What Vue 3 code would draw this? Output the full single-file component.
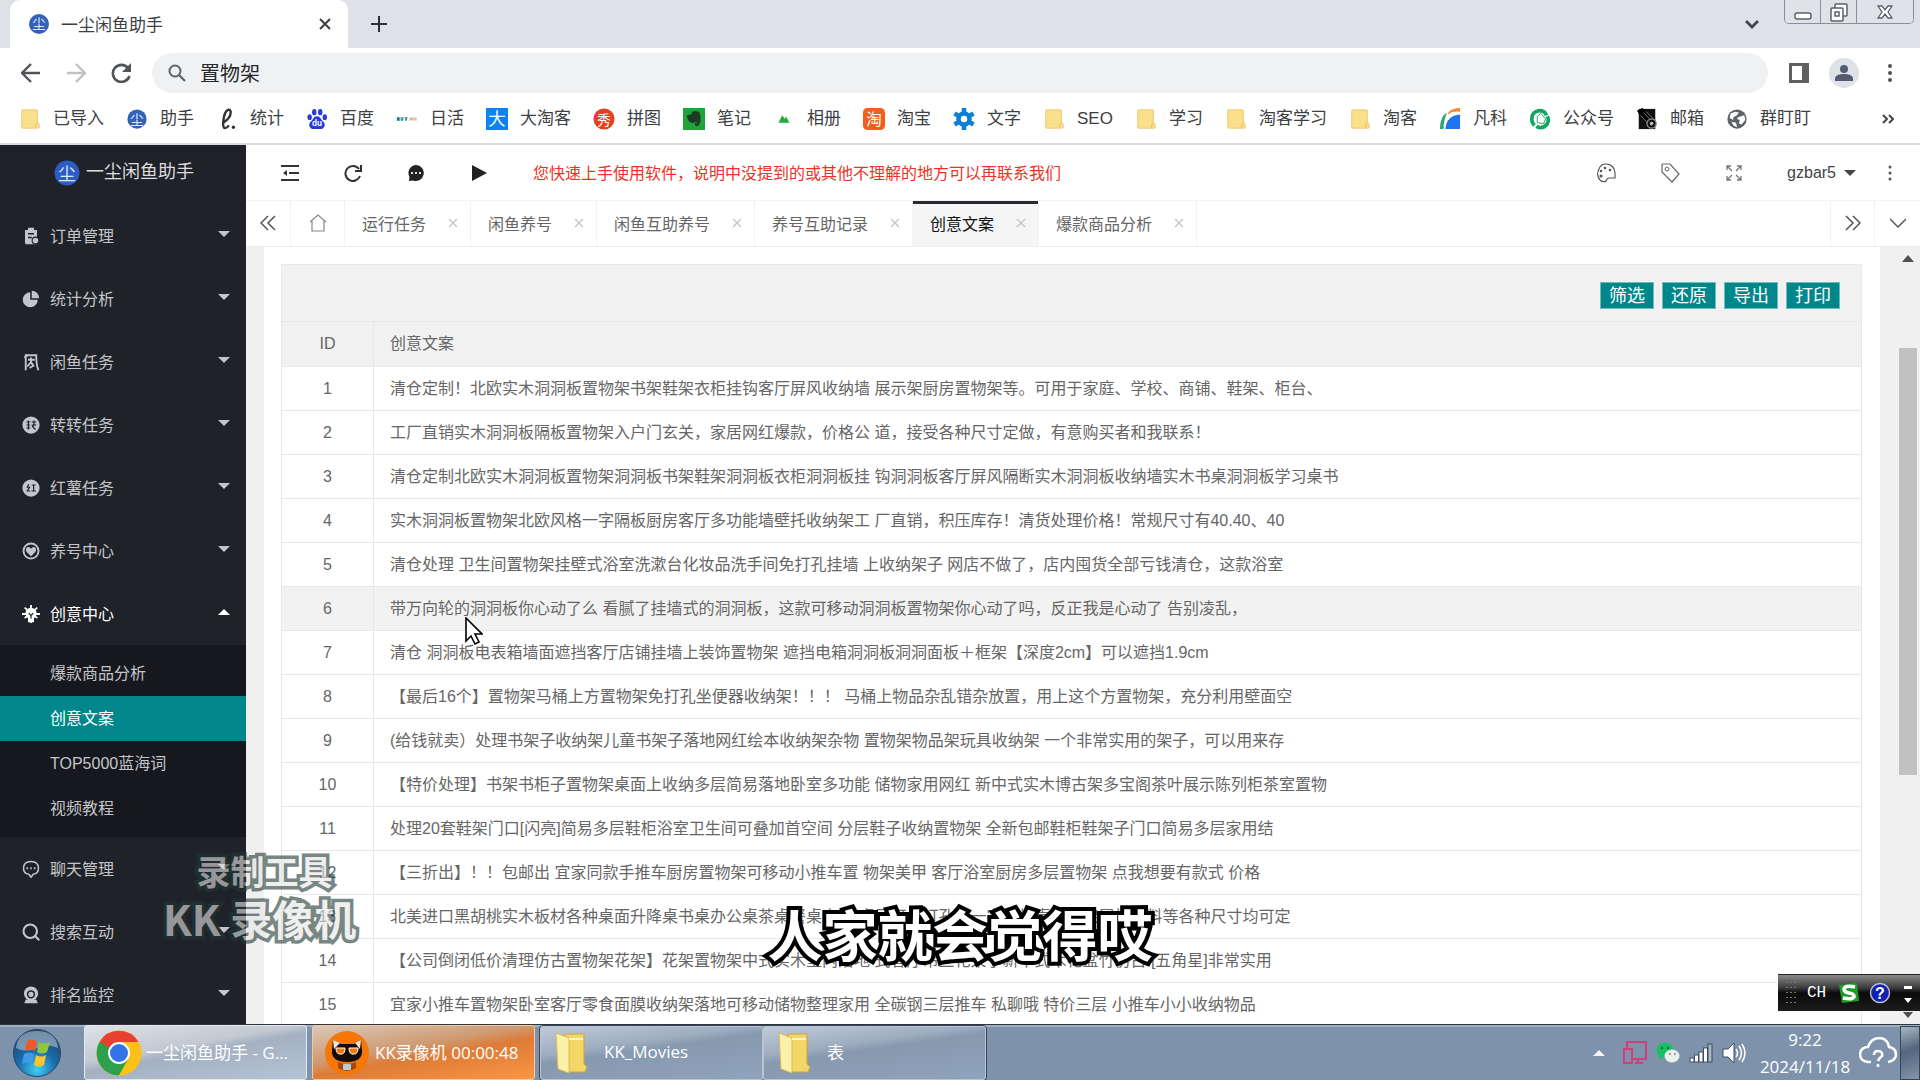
<script setup>
import { ref } from 'vue'

const glyph = (ch, fill, size = 14) =>
  `<text x="12" y="${12 + Math.round(size * 0.37)}" text-anchor="middle" font-size="${size}" fill="${fill}">${ch}</text>`

const folder =
  '<path d="M4 2h15q1 0 1 1v13q2 0 2 2v3q0 1-1 1H4q-1 0-1-1V3q0-1 1-1z" fill="#fbe08c" stroke="#e9c766"/><path d="M20 16q-2 1-2 5" fill="none" stroke="#e0ba50"/>'

const bookmarks = [
  { name: '已导入', icon: folder },
  { name: '助手', icon: '<circle cx="12" cy="12" r="10.500" fill="#3561b8"/>' + glyph('尘', '#dce8ff', 15) },
  { name: '统计', icon: '<path d="M8 16q8-5 8-11 0-4-3-3-4 2-5 12-1 8 2 8 2 0 4-3" fill="none" stroke="#333" stroke-width="2.600"/><circle cx="19" cy="21" r="1.800" fill="#333"/>' },
  { name: '百度', icon: '<g fill="#2a3bd6"><ellipse cx="4" cy="10" rx="2.400" ry="3.200"/><ellipse cx="9" cy="4.500" rx="2.400" ry="3.500"/><ellipse cx="15.500" cy="4.500" rx="2.400" ry="3.500"/><ellipse cx="20.500" cy="10" rx="2.400" ry="3.200"/><path d="M12 9c4 0 4 4 7 6 3 3 1 8-3 8h-8c-4 0-6-5-3-8 3-2 3-6 7-6z"/></g><text x="12" y="20" text-anchor="middle" font-size="9" font-weight="700" fill="#fff">du</text>' },
  { name: '日活', icon: '<path d="M1 10h3v4H1z" fill="#167a9b"/><path d="M5 10h3v4H5z" fill="#35a6a0"/><path d="M9 10h4v1H9zM10 11h2v3h-2z" fill="#2c8fae"/><path d="M14 10h9v4h-9z" fill="#f1d9cf"/><path d="M16 11h2v2h-2zM20 11h1v2h-1z" fill="#d9a08c"/>' },
  { name: '大淘客', icon: '<path d="M0 0h24v24H0z" fill="#0c83f5"/>' + glyph('大', '#fff', 19) },
  { name: '拼图', icon: '<circle cx="12" cy="12" r="11.500" fill="#e8401c"/>' + glyph('秀', '#fff', 15) },
  { name: '笔记', icon: '<path d="M0 0h24v24H0z" fill="#1fa43a"/><path d="M10 4q5-2 8 1 2 4 1 9-1 6-4 6-3-1-2-4h2q0 2 1 1 0-2-3-2-1 2-4 1-4-1-5-8l5-1z" fill="#1c3a26"/>' },
  { name: '相册', icon: '<path d="M6 16l4-8 3 4 1-3 4 7z" fill="#21ae38"/>' },
  { name: '淘宝', icon: '<rect width="24" height="24" rx="5" fill="#f0601c"/>' + glyph('淘', '#fff', 17) },
  { name: '文字', icon: '<g fill="none" stroke="#0f7fd6"><circle cx="12" cy="12" r="6" stroke-width="5"/><path d="M12 0v5M12 19v5M1.600 6l4.300 2.500M18.100 15.500l4.300 2.500M1.600 18l4.300-2.500M18.100 8.500l4.300-2.500" stroke-width="5"/></g>' },
  { name: 'SEO', icon: folder },
  { name: '学习', icon: folder },
  { name: '淘客学习', icon: folder },
  { name: '淘客', icon: folder },
  { name: '凡科', icon: '<path d="M10 5Q14 0 23 0v4Q14 3 10 7z" fill="#f28a3c"/><path d="M1 23Q1 9 9 5q-4 8-4 18z" fill="#2ba873"/><path d="M7 23Q8 8 23 7v16z" fill="#1f75f0"/>' },
  { name: '公众号', icon: '<g fill="none" stroke="#12a661" stroke-width="4"><path d="M11 3Q3 4 3 12q0 4 3 7"/><path d="M8 20q7 4 12-3 2-4 0-8"/><path d="M9 3q8-1 10 5"/></g><path d="M9 9l4-3 5 6-2 5-7-1z" fill="#fff" stroke="#12a661" stroke-width="1"/>' },
  { name: '邮箱', icon: '<path d="M3 1h18v22H3z" fill="#111"/><path d="M1 3l6-3 12 12-7 8z" fill="#000"/><path d="M5 8l8 9M8 5l9 9M11 4l8 8" stroke="#888" fill="none"/><circle cx="17" cy="17" r="5" fill="#111" stroke="#888" stroke-width="1.500"/><circle cx="17" cy="17" r="2" fill="#bbb"/>' },
  { name: '群盯盯', icon: '<circle cx="12" cy="12" r="10.500" fill="#5f6368"/><path d="M5 6l5-2 4 1-2 3-4 2 0 3-4-2zM13 10l7-2 1 5-4 5-3-1 1-4-3-1zM6 15l5 1 1 5-4-2z" fill="#fff"/>' },
]

const menu = [
  { name: '订单管理', caret: true, icon: '<path d="M4 4h4V1h8v3h4v17q0 2-2 2H6q-2 0-2-2z" fill="currentColor"/><path d="M8 9h8M8 14h5" stroke="#20222a" stroke-width="2"/><circle cx="18" cy="18" r="4.500" fill="currentColor" stroke="#20222a" stroke-width="1.500"/>' },
  { name: '统计分析', caret: true, icon: '<path d="M11 3a10 10 0 1 0 10 10H11z" fill="currentColor"/><path d="M13 1a10 10 0 0 1 10 10H13z" fill="currentColor"/>' },
  { name: '闲鱼任务', caret: true, icon: '<path d="M5 23V3h14q0 14 3 20M8 3L3 6M8 9h9M12 6v9M12 12l-5 6M12 12l4 6M10 20l5-3" fill="none" stroke="currentColor" stroke-width="2.500"/>' },
  { name: '转转任务', caret: true, icon: '<circle cx="12" cy="12" r="11.500" fill="currentColor"/><path d="M6 8h5M6 12h5M6 16h5M8.500 6v12M13 8h6M13 12h6M16 6v6l-2 2 4 4" stroke="#20222a" stroke-width="1.600" fill="none"/>' },
  { name: '红薯任务', caret: true, icon: '<circle cx="12" cy="12" r="11.500" fill="currentColor"/><path d="M9 7l-2 4h3l-3 5h4M13 8h5M15.500 8v8M12.500 16h6" stroke="#20222a" stroke-width="1.600" fill="none"/>' },
  { name: '养号中心', caret: true, icon: '<circle cx="12" cy="12" r="10" fill="none" stroke="currentColor" stroke-width="2.500"/><path d="M12 19l-6-6q-2-4 1-6 3-1 5 2 2-3 5-2 3 2 1 6z" fill="currentColor"/>' },
  {
    name: '创意中心', caret: true, open: true,
    icon: '<path d="M12 0v24M0 12h24M3.500 3.500l17 14M20.500 3.500l-17 14" stroke="currentColor" stroke-width="2.400"/><circle cx="12" cy="11" r="7.500" fill="currentColor"/><path d="M8 16h8v7H8z" fill="currentColor"/><path d="M9 11l3 3 3-3M12 14v4" stroke="#20222a" stroke-width="1.600" fill="none"/>',
    children: ['爆款商品分析', '创意文案', 'TOP5000蓝海词', '视频教程'],
  },
  { name: '聊天管理', caret: true, icon: '<path d="M12 2q10 0 10 9 0 7-7 8l-3 4-3-4q-7-1-7-8 0-9 10-9z" fill="none" stroke="currentColor" stroke-width="2"/><path d="M6 11h2M11 11h2M16 11h2" stroke="currentColor" stroke-width="2.500"/>' },
  { name: '搜索互动', caret: true, icon: '<circle cx="11" cy="11" r="9" fill="none" stroke="currentColor" stroke-width="2.800"/><path d="M17 17l6 6" stroke="currentColor" stroke-width="2.800"/>' },
  { name: '排名监控', caret: true, icon: '<circle cx="12" cy="10" r="9.500" fill="currentColor"/><path d="M5 18h14l2 5H3z" fill="currentColor"/><circle cx="12" cy="11" r="4.500" fill="none" stroke="#20222a" stroke-width="2"/>' },
]

const activeChild = '创意文案'
const tabs = ['运行任务', '闲鱼养号', '闲鱼互助养号', '养号互助记录', '创意文案', '爆款商品分析']
const actions = ['筛选', '还原', '导出', '打印']

const rows = [
  '清仓定制！北欧实木洞洞板置物架书架鞋架衣柜挂钩客厅屏风收纳墙 展示架厨房置物架等。可用于家庭、学校、商铺、鞋架、柜台、',
  '工厂直销实木洞洞板隔板置物架入户门玄关，家居网红爆款，价格公 道，接受各种尺寸定做，有意购买者和我联系！',
  '清仓定制北欧实木洞洞板置物架洞洞板书架鞋架洞洞板衣柜洞洞板挂 钩洞洞板客厅屏风隔断实木洞洞板收纳墙实木书桌洞洞板学习桌书',
  '实木洞洞板置物架北欧风格一字隔板厨房客厅多功能墙壁托收纳架工 厂直销，积压库存！清货处理价格！常规尺寸有40.40、40',
  '清仓处理 卫生间置物架挂壁式浴室洗漱台化妆品洗手间免打孔挂墙 上收纳架子 网店不做了，店内囤货全部亏钱清仓，这款浴室',
  '带万向轮的洞洞板你心动了么 看腻了挂墙式的洞洞板，这款可移动洞洞板置物架你心动了吗，反正我是心动了 告别凌乱，',
  '清仓 洞洞板电表箱墙面遮挡客厅店铺挂墙上装饰置物架 遮挡电箱洞洞板洞洞面板＋框架【深度2cm】可以遮挡1.9cm',
  '【最后16个】置物架马桶上方置物架免打孔坐便器收纳架！！！ 马桶上物品杂乱错杂放置，用上这个方置物架，充分利用壁面空',
  '(给钱就卖）处理书架子收纳架儿童书架子落地网红绘本收纳架杂物 置物架物品架玩具收纳架 一个非常实用的架子，可以用来存',
  '【特价处理】书架书柜子置物架桌面上收纳多层简易落地卧室多功能 储物家用网红 新中式实木博古架多宝阁茶叶展示陈列柜茶室置物',
  '处理20套鞋架门口[闪亮]简易多层鞋柜浴室卫生间可叠加首空间 分层鞋子收纳置物架 全新包邮鞋柜鞋架子门口简易多层家用结',
  '【三折出】！！包邮出 宜家同款手推车厨房置物架可移动小推车置 物架美甲 客厅浴室厨房多层置物架 点我想要有款式 价格',
  '北美进口黑胡桃实木板材各种桌面升降桌书桌办公桌茶桌餐桌电脑 桌子可以打孔做一字隔板桌腿书架层板材料等各种尺寸均可定',
  '【公司倒闭低价清理仿古置物架花架】花架置物架中式实木室内落地 式客厅吊兰花架子新中式木花盆竹仿古 [五角星]非常实用',
  '宜家小推车置物架卧室客厅零食面膜收纳架落地可移动储物整理家用 全碳钢三层推车 私聊哦 特价三层 小推车小小收纳物品',
]
const hovered = 6
const query = ref('置物架')
</script>

<template>
  <div class="screen">
    <header class="browser">
      <div class="tabstrip">
        <div class="btab">
          <svg class="i20" viewBox="0 0 24 24"><circle cx="12" cy="12" r="12" fill="#3561b8" /><text x="12" y="18" text-anchor="middle" font-size="16" fill="#dce8ff">尘</text></svg>
          <span class="btitle">一尘闲鱼助手</span>
          <button class="plain" aria-label="关闭标签页"><svg class="i12" viewBox="0 0 12 12"><path d="M1 1l10 10M11 1L1 11" stroke="#3c4043" stroke-width="2" /></svg></button>
        </div>
        <button class="plain newtab" aria-label="新标签页"><svg class="i16" viewBox="0 0 16 16"><path d="M8 0v16M0 8h16" stroke="#303134" stroke-width="2" /></svg></button>
        <button class="plain tabsearch" aria-label="搜索标签页"><svg class="i14" viewBox="0 0 14 14"><path d="M1 4l6 6 6-6" fill="none" stroke="#45484c" stroke-width="3" /></svg></button>
        <div class="winbtns">
          <button aria-label="最小化"><svg width="18" height="20" viewBox="0 0 18 20"><rect x="1" y="11" width="16" height="6" rx="2" fill="#fff" stroke="#5c6068" stroke-width="1.500" /></svg></button>
          <button aria-label="还原"><svg width="20" height="20" viewBox="0 0 20 20"><g fill="#fff" stroke="#5c6068" stroke-width="1.500"><rect x="6" y="2" width="12" height="12" rx="1" /><rect x="2" y="6" width="12" height="13" rx="1" /><rect x="6" y="10" width="4" height="4" /></g></svg></button>
          <button class="wide" aria-label="关闭"><svg width="18" height="18" viewBox="0 0 18 18"><path d="M2 3h4l3 4 3-4h4l-4 6 4 6h-4l-3-4-3 4H2l4-6z" fill="#fff" stroke="#5c6068" stroke-width="1.300" /></svg></button>
        </div>
      </div>

      <div class="navbar">
        <button class="plain nav" aria-label="后退"><svg class="i20" viewBox="0 0 20 20"><path d="M19 10H2M10 1l-9 9 9 9" fill="none" stroke="#505357" stroke-width="2.400" /></svg></button>
        <button class="plain nav" aria-label="前进"><svg class="i20" viewBox="0 0 20 20"><path d="M1 10h17M10 1l9 9-9 9" fill="none" stroke="#bfc1c4" stroke-width="2.400" /></svg></button>
        <button class="plain nav" aria-label="刷新"><svg class="i20" viewBox="0 0 20 20"><path d="M17 5a8.500 8.500 0 1 0 1.500 8" fill="none" stroke="#505357" stroke-width="2.600" /><path d="M20 0v9h-9z" fill="#505357" /></svg></button>
        <label class="omnibox">
          <svg class="i18" viewBox="0 0 18 18"><circle cx="7" cy="7" r="5.500" fill="none" stroke="#606367" stroke-width="2" /><path d="M11 11l6 6" stroke="#606367" stroke-width="2.200" /></svg>
          <input v-model="query" type="text" aria-label="地址和搜索栏" />
        </label>
        <button class="plain side" aria-label="侧边栏"><svg class="i20" viewBox="0 0 20 20"><rect x="1.500" y="1.500" width="17" height="17" fill="#fff" stroke="#5f6062" stroke-width="3" /><path d="M13 1h6v18h-6z" fill="#5f6062" /></svg></button>
        <button class="plain avatar" aria-label="个人资料"><svg class="i18" viewBox="0 0 18 18"><circle cx="9" cy="5" r="4" fill="#535a72" /><path d="M0 17v-3q1-4 9-4t9 4v3z" fill="#535a72" /></svg></button>
        <button class="plain kebab" aria-label="菜单"><svg width="6" height="20" viewBox="0 0 6 20"><g fill="#505357"><circle cx="3" cy="3" r="2" /><circle cx="3" cy="10" r="2" /><circle cx="3" cy="17" r="2" /></g></svg></button>
      </div>

      <nav class="bookmarks">
        <a v-for="b in bookmarks" :key="b.name" href="#"><svg class="i22" viewBox="0 0 24 24" v-html="b.icon"></svg>{{ b.name }}</a>
        <button class="plain more" aria-label="更多书签"><svg class="i12" viewBox="0 0 12 12"><path d="M1 2l4 4-4 4M7 2l4 4-4 4" fill="none" stroke="#45484c" stroke-width="2" /></svg></button>
      </nav>
    </header>

    <div class="app">
      <aside class="sidebar">
        <div class="logo">
          <svg class="i26" viewBox="0 0 24 24"><circle cx="12" cy="12" r="11.500" fill="#2c5cc4" /><text x="12" y="18" text-anchor="middle" font-size="16" fill="#dce8ff">尘</text></svg>
          <span>一尘闲鱼助手</span>
        </div>
        <ul class="menu">
          <li v-for="m in menu" :key="m.name">
            <a href="#" class="item" :class="{ open: m.open }">
              <svg class="i18" viewBox="0 0 24 24" v-html="m.icon"></svg>
              <span>{{ m.name }}</span>
              <i v-if="m.caret" class="caret"></i>
            </a>
            <ul v-if="m.children" class="sub">
              <li v-for="c in m.children" :key="c"><a href="#" :class="{ on: c === activeChild }">{{ c }}</a></li>
            </ul>
          </li>
        </ul>
      </aside>

      <main class="main">
        <div class="topbar">
          <div class="tools">
            <button class="plain" aria-label="收起菜单"><svg class="i18" viewBox="0 0 18 18"><path d="M0 2h18M8 9h10M0 16h18" stroke="#333" stroke-width="2" /><path d="M6 6v6L2 9z" fill="#333" /></svg></button>
            <button class="plain" aria-label="刷新"><svg class="i18" viewBox="0 0 18 18"><path d="M15 5a7.500 7.500 0 1 0 1 7" fill="none" stroke="#333" stroke-width="2" /><path d="M17 1v6h-6" fill="none" stroke="#333" stroke-width="2" /></svg></button>
            <button class="plain" aria-label="消息"><svg class="i18" viewBox="0 0 18 18"><path d="M9 1a8 8 0 1 1-3 15.500L2 17l.5-4A8 8 0 0 1 9 1z" fill="#222" /><path d="M4 9h2M8 9h2M12 9h2" stroke="#ddd" stroke-width="2" /></svg></button>
            <button class="plain" aria-label="播放"><svg class="i18" viewBox="0 0 18 18"><path d="M2 1l15 8-15 8z" fill="#222" /></svg></button>
          </div>
          <p class="notice">您快速上手使用软件，说明中没提到的或其他不理解的地方可以再联系我们</p>
          <div class="user">
            <button class="plain" aria-label="主题"><svg class="i20" viewBox="0 0 20 20"><path d="M10 1c6 0 9 5 9 9v5l-6 0c-2 0-2 1-3 3-1 1-4 1-6-1-3-3-3-8-1-11 1-3 4-5 7-5z" fill="none" stroke="#555" stroke-width="1.200" /><g fill="#555"><circle cx="5" cy="8" r="1.300" /><circle cx="9" cy="5" r="1.300" /><circle cx="14" cy="7" r="1.300" /><circle cx="5" cy="13" r="1.600" /></g></svg></button>
            <button class="plain" aria-label="便签"><svg class="i20" viewBox="0 0 20 20"><path d="M1 2q0-1 1-1h7l9 10-7 8L1 9z" fill="none" stroke="#666" stroke-width="1.200" /><circle cx="6" cy="6" r="2" fill="none" stroke="#666" /></svg></button>
            <button class="plain" aria-label="全屏"><svg class="i16" viewBox="0 0 16 16"><path d="M6 6L1 1M1 5V1h4M10 6l5-5M11 1h4v4M6 10l-5 5M1 11v4h4M10 10l5 5M11 15h4v-4" fill="none" stroke="#777" stroke-width="1.300" /></svg></button>
            <a href="#" class="name">gzbar5<i class="caret dark"></i></a>
            <button class="plain last" aria-label="更多"><svg width="4" height="18" viewBox="0 0 4 18"><g fill="#555"><circle cx="2" cy="3" r="1.500" /><circle cx="2" cy="9" r="1.500" /><circle cx="2" cy="15" r="1.500" /></g></svg></button>
          </div>
        </div>

        <div class="pagetabs">
          <button class="plain cell" aria-label="向左"><svg class="i16" viewBox="0 0 16 16"><path d="M8 1L1 8l7 7M15 1L8 8l7 7" fill="none" stroke="#555" stroke-width="1.500" /></svg></button>
          <button class="plain cell home" aria-label="首页"><svg class="i18" viewBox="0 0 18 18"><path d="M1 8l8-7 8 7M3 7v10h12V7" fill="none" stroke="#888" stroke-width="1.200" /></svg></button>
          <div v-for="t in tabs" :key="t" class="ptab" :class="{ on: t === activeChild }">
            <a href="#">{{ t }}</a>
            <button class="plain" :aria-label="'关闭' + t"><svg class="i10" viewBox="0 0 10 10"><path d="M1 1l8 8M9 1L1 9" stroke="#c4c4c4" stroke-width="1.300" /></svg></button>
          </div>
          <button class="plain cell right" aria-label="向右"><svg class="i16" viewBox="0 0 16 16"><path d="M1 1l7 7-7 7M8 1l7 7-7 7" fill="none" stroke="#555" stroke-width="1.500" /></svg></button>
          <button class="plain cell" aria-label="标签菜单"><svg class="i16" viewBox="0 0 16 16"><path d="M0 4l8 8 8-8" fill="none" stroke="#555" stroke-width="1.500" /></svg></button>
        </div>

        <div class="content">
          <section class="card">
            <div class="tbar"><button v-for="a in actions" :key="a">{{ a }}</button></div>
            <table>
              <thead><tr><th class="id">ID</th><th>创意文案</th></tr></thead>
              <tbody>
                <tr v-for="(r, n) in rows" :key="n" :class="{ hover: n + 1 === hovered }">
                  <td class="id">{{ n + 1 }}</td><td>{{ r }}</td>
                </tr>
              </tbody>
            </table>
          </section>
          <div class="scroll"><i class="up"></i><i class="thumb"></i><i class="down"></i></div>
        </div>
      </main>
    </div>

    <footer class="taskbar">
      <button class="start" aria-label="开始">
        <svg width="50" height="50" viewBox="0 0 50 50">
          <defs><radialGradient id="orb" cx="50%" cy="85%" r="80%"><stop offset="0" stop-color="#3fd0f5" /><stop offset=".5" stop-color="#1a6bab" /><stop offset="1" stop-color="#24486f" /></radialGradient></defs>
          <circle cx="25" cy="25" r="23.500" fill="url(#orb)" stroke="#26466b" />
          <path d="M4 20Q6 3 25 3t21 17Q36 15 25 20 14 25 4 20z" fill="#fff" opacity=".38" />
          <path d="M15 13q5-3 10 0l-2 10q-5-3-10 0z" fill="#ee5a24" /><path d="M27 14q5 3 11 0l-3 10q-5 3-10 0z" fill="#8fc73e" />
          <path d="M12 26q5-3 10 0l-2 10q-5-3-10 0z" fill="#3f9be8" /><path d="M24 27q5 3 10 0l-2 10q-5 3-10 0z" fill="#fdc62f" />
        </svg>
      </button>
      <button class="task chrome">
        <svg width="46" height="46" viewBox="0 0 46 46"><circle cx="23" cy="23" r="22.500" fill="#fbc116" /><path d="M3.500 12A22.500 22.500 0 0 1 42.500 12H23v22z" fill="#e8412f" /><path d="M3.500 12A22.500 22.500 0 0 0 23 45.500L32.500 29 23 23z" fill="#2da04c" /><path d="M23 12h19.500A22.500 22.500 0 0 1 23 45.500L32.500 29z" fill="#fbc116" /><circle cx="23" cy="23" r="11" fill="#fff" /><circle cx="23" cy="23" r="9" fill="#3273e8" /></svg>
        <span>一尘闲鱼助手 - G...</span>
      </button>
      <button class="task kk">
        <svg width="44" height="44" viewBox="0 0 44 44"><circle cx="22" cy="22" r="22" fill="#f57806" /><path d="M8 9l8 4h13l7-4 1 10q1 12-15 12T7 19z" fill="#120d0a" /><path d="M8 9l7 3-6 6zM36 9l-6 3 5 6z" fill="#f2e6da" /><path d="M11 17h9q0 7-5 6-4 0-4-6zM24 17h9q0 6-4 6-5 1-5-6z" fill="#f57806" stroke="#fff" /><path d="M13 31q9 4 18 0v6q-9 6-18 0z" fill="#a4480b" /><rect x="18" y="33" width="8" height="6" rx="1" fill="#c3cbd2" /></svg>
        <span>KK录像机 00:00:48</span>
      </button>
      <div class="pair">
        <button v-for="f in ['KK_Movies', '表']" :key="f" class="task dir">
          <svg width="34" height="44" viewBox="0 0 34 44"><path d="M10 3h19v30l3 3-2 5H10z" fill="#f2d667" stroke="#cba73c" /><path d="M1 2l13 5v35L3 38z" fill="#fdf0a8" stroke="#d9ba54" /><path d="M14 8h14" stroke="#fff6c8" stroke-width="2" /></svg>
          <span>{{ f }}</span>
        </button>
      </div>
      <div class="tray">
        <i class="trayup"></i>
        <svg width="24" height="24" viewBox="0 0 24 24"><g fill="none" stroke="#cf3f7c" stroke-width="2"><path d="M4 7V1h19v17H10M12 22h8M15 18v4" /><rect x="1" y="8" width="8" height="14" /></g></svg>
        <svg width="24" height="24" viewBox="0 0 24 24"><ellipse cx="9" cy="9" rx="8.500" ry="7.500" fill="#1bbf63" /><path d="M3 14l-1 5 5-3z" fill="#1bbf63" /><ellipse cx="16" cy="15" rx="7.500" ry="6.500" fill="#e9f2ec" /><g fill="#126b39"><circle cx="6" cy="7" r="1.200" /><circle cx="12" cy="7" r="1.200" /></g><g fill="#78857d"><circle cx="14" cy="13" r="1" /><circle cx="19" cy="13" r="1" /></g></svg>
        <svg width="24" height="20" viewBox="0 0 24 20"><g fill="#fff" stroke="#3d4c60" stroke-width="1"><rect x="1" y="15" width="4" height="4" /><rect x="5.500" y="12" width="4" height="7" /><rect x="10" y="9" width="4" height="10" /><rect x="14.500" y="5" width="4" height="14" /><rect x="19" y="1" width="4" height="18" fill="#a9b6c6" /></g></svg>
        <svg width="24" height="24" viewBox="0 0 24 24"><path d="M1 8h5l6-6v20l-6-6H1z" fill="#fff" stroke="#3d4c60" /><path d="M14 8q3 4 0 8M17 5q5 7 0 14M20 3q6 9 0 18" fill="none" stroke="#fff" stroke-width="1.500" /></svg>
      </div>
      <div class="clock"><span>9:22</span><span>2024/11/18</span></div>
      <svg class="cloud" width="38" height="32" viewBox="0 0 38 32"><path d="M12 25H9Q1 24 1 17q1-7 8-7Q12 1 21 1q8 1 9 9 7 1 7 8-1 6-8 7" fill="none" stroke="#fff" stroke-width="2.500" /><path d="M15 18q0-4 4-4 5 0 4 5-3 2-4 5M19 27v3" fill="none" stroke="#fff" stroke-width="2.500" /></svg>
      <button class="desk" aria-label="显示桌面"></button>
    </footer>

    <div class="lang">
      <i class="grip"></i>
      <span class="ch">CH</span>
      <svg class="i22" viewBox="0 0 22 22"><path d="M1 3l18-2 2 18-17 2z" fill="#1f9a24" /><path d="M17 5q-10-2-11 2 0 3 5 4 6 1 5 4-2 3-11 1" fill="none" stroke="#fff" stroke-width="3.500" /></svg>
      <svg class="i22" viewBox="0 0 22 22"><circle cx="11" cy="11" r="9.500" fill="#1220b0" stroke="#b9bdd8" stroke-width="1.500" /><text x="11" y="17" text-anchor="middle" font-size="16" font-weight="700" fill="#fff">?</text></svg>
      <svg class="opts" width="10" height="22" viewBox="0 0 10 22"><path d="M1 4h8v3H1zM1 16h8l-4 5z" fill="#fff" /></svg>
    </div>

    <div class="watermark"><span class="wm1">录制工具</span><span class="wm2">KK 录像机</span></div>
    <p class="caption">人家就会觉得哎</p>
    <svg class="cursor" width="18" height="28" viewBox="0 0 18 28"><path d="M1 1v23l5-5 4 8 4-2-4-8h7z" fill="#fff" stroke="#000" stroke-width="1.600" /></svg>
  </div>
</template>

<style>
html,
body {
  margin: 0;
  background: #f0f0f0;
}
</style>

<style scoped>
.screen {
  position: relative;
  display: flex;
  flex-direction: column;
  height: 100vh;
  overflow: hidden;
  font-family: "Liberation Sans", "Noto Sans CJK SC", sans-serif;
  font-size: 16px;
  color: #666;
}
* { box-sizing: border-box; }
a { color: inherit; text-decoration: none; }
ul { list-style: none; margin: 0; padding: 0; }
svg { display: block; flex: none; }
button, input { font: inherit; color: inherit; }
.plain { border: 0; background: none; padding: 0; display: flex; align-items: center; justify-content: center; flex: none; }
.i10 { width: 10px; height: 10px; }
.i12 { width: 12px; height: 12px; }
.i14 { width: 14px; height: 14px; }
.i16 { width: 16px; height: 16px; }
.i18 { width: 18px; height: 18px; }
.i20 { width: 20px; height: 20px; }
.i22 { width: 22px; height: 22px; }
.i26 { width: 26px; height: 26px; }

/* browser chrome */
.browser { flex: none; background: #fff; color: #3c4043; border-bottom: 2px solid #dcdadd; }
.tabstrip { display: flex; align-items: center; height: 48px; background: #dee1e6; padding: 0 6px 0 10px; }
.btab { display: flex; align-items: center; width: 338px; height: 48px; padding: 0 17px 0 19px; background: #fff; border-radius: 10px 10px 0 0; }
.btitle { flex: 1; margin-left: 12px; padding-bottom: 2px; font-size: 17px; }
.newtab { margin-left: 23px; }
.tabsearch { margin-left: auto; margin-right: 25px; }
.winbtns { display: flex; align-self: flex-start; height: 24px; border: 1px solid #8b9098; border-top: 0; border-radius: 0 0 5px 5px; overflow: hidden; }
.winbtns button { display: flex; align-items: center; justify-content: center; width: 36px; padding: 0; border: 0; border-right: 1px solid #8b9098; background: #dfe2e7; }
.winbtns .wide { width: 56px; border-right: 0; }
.navbar { display: flex; align-items: center; height: 50px; padding: 0 20px 0 8px; }
.nav { width: 45px; height: 40px; }
.omnibox { display: flex; flex: 1; align-items: center; height: 40px; margin-left: 9px; padding: 0 16px; border-radius: 20px; background: #f0f1f3; }
.omnibox input { flex: 1; margin-left: 14px; padding: 0 0 2px; border: 0; outline: 0; background: none; font-size: 20px; color: #26282b; }
.side { margin-left: 21px; }
.avatar { width: 30px; height: 30px; margin-left: 20px; border-radius: 50%; background: #dfe1e8; }
.kebab { width: 20px; margin-left: 21px; }
.bookmarks { display: flex; align-items: center; gap: 22px; height: 45px; padding: 0 26px 4px 19px; font-size: 17px; line-height: 22px; white-space: nowrap; }
.bookmarks a { display: flex; align-items: center; gap: 12px; }
.more { margin-left: auto; }

/* application */
.app { display: flex; flex: 1; min-height: 0; }
.sidebar { flex: none; width: 246px; overflow: hidden; background: #20222a; color: #c4c5c8; }
.logo { display: flex; align-items: center; gap: 6px; height: 59px; padding: 0 0 4px 54px; font-size: 18px; line-height: 22px; color: #dcdddf; }
.logo span { padding-bottom: 2px; }
.item { display: flex; align-items: center; height: 63px; padding: 0 16px 0 22px; }
.item span { flex: 1; margin-left: 10px; padding-bottom: 2px; }
.item.open { color: #fff; }
.caret { width: 0; height: 0; margin-bottom: 4px; border: 6px solid transparent; border-top-color: currentColor; border-bottom: 0; }
.open .caret { border-top: 0; border-bottom: 6px solid currentColor; }
.sub { padding: 6px 0; background: #16181e; }
.sub a { display: block; height: 45px; padding-left: 50px; line-height: 45px; }
.sub .on { background: #00868b; color: #fff; }

.main { display: flex; flex: 1; flex-direction: column; min-width: 0; background: #fff; }
.topbar { display: flex; flex: none; align-items: center; height: 55px; padding: 0 23px 0 35px; }
.tools { display: flex; gap: 45px; }
.notice { margin: 0 0 0 45px; padding-bottom: 2px; color: #ee3124; white-space: nowrap; }
.user { display: flex; align-items: center; gap: 45px; margin-left: auto; color: #444; }
.name { display: flex; align-items: center; gap: 8px; }
.dark { margin-bottom: 0; }
.last { width: 14px; margin-left: -18px; }
.pagetabs { display: flex; flex: none; height: 47px; border-top: 1px solid #f3f3f3; border-bottom: 1px solid #eee; }
.cell { width: 45px; padding-bottom: 2px; border-right: 1px solid #f3f3f3; }
.cell:last-child { border-right: 0; }
.home { width: 54px; }
.right { margin-left: auto; border-left: 1px solid #f3f3f3; }
.ptab { display: flex; align-items: center; gap: 22px; padding: 0 12px 2px 17px; border-right: 1px solid #f3f3f3; white-space: nowrap; }
.ptab.on { background: #f5f5f5; color: #111; box-shadow: inset 0 3px #292b34; }
.content { display: flex; flex: 1; min-height: 0; padding-left: 18px; overflow: hidden; background: #f0f0f0; }
.card { flex: 1; min-width: 0; padding: 17px 18px 0 17px; background: #fff; }
.tbar { display: flex; align-items: center; justify-content: flex-end; gap: 8px; height: 57px; padding: 5px 21px 0 0; border: 1px solid #eaeaea; border-bottom: 0; background: #f1f1f1; }
.tbar button { width: 54px; height: 27px; padding: 0; border: 1px solid #6fbcbc; background: #00868b; color: #fff; font-size: 18px; line-height: 24px; }
table { width: 100%; table-layout: fixed; border-collapse: collapse; }
th, td { height: 44px; padding: 0 16px; overflow: hidden; border: 1px solid #e8e8e8; text-align: left; font-weight: 400; line-height: 20px; white-space: nowrap; }
th { height: 45px; background: #f1f1f1; }
.id { width: 92px; text-align: center; }
.hover { background: #f2f2f2; }
.scroll { display: flex; flex: none; flex-direction: column; align-items: center; width: 40px; padding: 8px 2px 6px 18px; }
.up { border: 6px solid transparent; border-top: 0; border-bottom: 7px solid #505050; }
.thumb { width: 18px; height: 56%; margin-top: 86px; background: #c1c1c1; }
.down { margin-top: auto; border: 5px solid transparent; border-bottom: 0; border-top: 6px solid #505050; }

/* desktop taskbar */
.taskbar { display: flex; flex: none; align-items: center; height: 56px; border-top: 1px solid #30353f; background: #7e93ab; box-shadow: inset 0 2px #9fb0c3; color: #fff; font-family: "Open Sans", "Noto Sans CJK SC", sans-serif; font-size: 17px; }
.start { width: 84px; padding: 0 0 0 12px; border: 0; background: none; }
.task { display: flex; align-items: center; height: 55px; padding: 0; border: 1px solid #e1e8ef; border-radius: 3px; white-space: nowrap; }
.task span { padding-bottom: 3px; }
.chrome { width: 223px; padding-left: 11px; background: linear-gradient(170deg, #dfe2e6 0, #c2c9d2 40%, #a4b1c1 50%, #b4c3d6 100%); }
.chrome span { margin-left: 4px; }
.kk { width: 223px; margin-left: 5px; padding-left: 12px; border-color: #f7c99c; background: linear-gradient(170deg, #dcc8b8 0, #cf9b73 40%, #dd7c37 55%, #fb9544 100%); }
.kk span { margin-left: 6px; }
.pair { display: flex; margin-left: 4px; border: 1px solid #35465c; border-radius: 4px; }
.dir { width: 223px; height: 54px; padding-left: 14px; border-color: #b8c5d4; background: linear-gradient(172deg, #c0cbd8 0, #9dacbf 35%, #8799af 45%, #8fa3bc 100%); }
.dir span { margin-left: 15px; }
.tray { display: flex; align-items: center; gap: 9px; margin-left: auto; }
.trayup { margin-right: 9px; border: 6px solid transparent; border-top: 0; border-bottom: 6px solid #f0f4f8; }
.clock { display: flex; flex-direction: column; align-items: center; width: 92px; margin-left: 13px; font-size: 17px; line-height: 27px; }
.cloud { margin: 0 3px 0 8px; }
.desk { width: 20px; height: 54px; border: 1px solid #35465c; background: linear-gradient(160deg, #a9b6c5, #53667f 45%, #8294a9); }

/* floating layers */
.lang { position: absolute; right: 0; bottom: 69px; display: flex; align-items: center; width: 142px; height: 37px; padding: 0 7px; background: linear-gradient(#8a8a8a, #3c3c3c 35%, #0b0b0b 50%, #1c1c1c); border-top: 1px solid #222; color: #fff; }
.grip { width: 11px; height: 26px; background: radial-gradient(circle, #777 1px, transparent 1px) 0 0 / 4px 5px; }
.ch { margin: 0 12px 0 11px; font-family: "Liberation Mono", monospace; font-size: 16px; }
.lang .i22 + .i22 { margin-left: 9px; }
.opts { margin-left: auto; }
.watermark { position: absolute; left: 163px; bottom: 138px; display: flex; flex-direction: column; align-items: center; color: #e6e6e6; opacity: .6; font-family: "Noto Sans CJK SC", sans-serif; font-weight: 700; white-space: nowrap; -webkit-text-stroke: 7px #203832; paint-order: stroke fill; }
.wm1 { margin-left: 10px; font-size: 34px; line-height: 46px; }
.wm2 { font-size: 42px; line-height: 48px; }
.caption { position: absolute; left: 0; right: 0; bottom: 110px; margin: 0; text-align: center; font-family: "Noto Sans CJK SC", sans-serif; font-size: 55px; font-weight: 700; line-height: 76px; color: #fff; -webkit-text-stroke: 8px #000; paint-order: stroke fill; pointer-events: none; }
.cursor { position: absolute; left: 465px; top: 617px; }
</style>
